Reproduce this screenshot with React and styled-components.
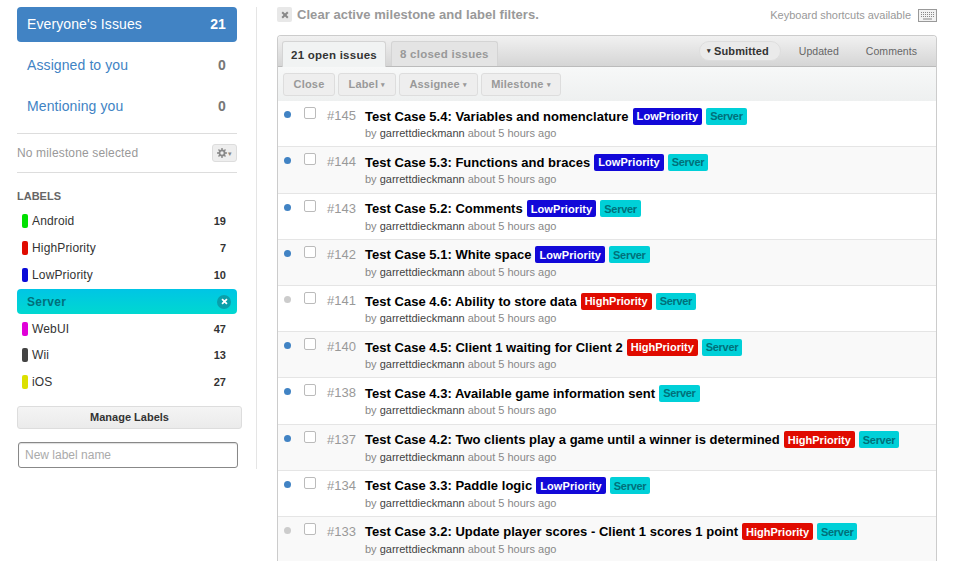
import React from 'react';
import styled, { createGlobalStyle } from 'styled-components';

const Global = createGlobalStyle`
  html, body { margin: 0; padding: 0; background: #fff; overflow: hidden; height: 561px; }
  body { font-family: "Liberation Sans", Arial, sans-serif; font-size: 12px; color: #333; }
`;
const Page = styled.div`display: flex; width: 966px; height: 561px; overflow: hidden;`;
const Sidebar = styled.aside`
  width: 225px; margin-left: 17px; padding-top: 7px; flex: none; position: relative;
`;
const Divider = styled.div`width: 1px; height: 462px; margin: 7px 0 0 14px; background: #e5e5e5; flex: none;`;
const Main = styled.main`width: 660px; margin-left: 20px; flex: none;`;
const NavList = styled.div`width: 220px; display: flex; flex-direction: column; gap: 6px;`;
const NavItem = styled.a`
  display: flex; justify-content: space-between; align-items: center; height: 35px; box-sizing: border-box; padding: 0 11px 2px 10px;
  border-radius: 4px; font-size: 14px; letter-spacing: .1px; color: ${p => p.$active ? '#fff' : '#4183c4'};
  background: ${p => p.$active ? '#4183c4' : 'transparent'};
`;
const NavCount = styled.b`font-size: 14px; color: ${p => p.$active ? '#fff' : '#777'};`;
const MilestoneRow = styled.div`
  width: 220px; height: 38px; margin-top: 9px; border-top: 1px solid #ddd; border-bottom: 1px solid #ddd;
  display: flex; align-items: center; justify-content: space-between; font-size: 12px; letter-spacing: .15px; color: #999;
  box-sizing: content-box;
`;
const GearButton = styled.span`
  width: 25px; height: 18px; box-sizing: border-box; border: 1px solid #ddd; border-radius: 3px; background: #eee;
  display: flex; align-items: center; justify-content: center; gap: 1px; color: #888;
`;
const LabelsHead = styled.h3`margin: 16px 0 0; font-size: 11px; line-height: 14px; font-weight: bold; color: #666;`;
const LabelList = styled.div`width: 220px; margin-top: 5px; display: flex; flex-direction: column;`;
const LabelRow = styled.div`
  height: 26.8px; padding: 0 11px 0 5px; display: flex; align-items: center; font-size: 12px; color: #333;
`;
const Swatch = styled.i`width: 6px; height: 14px; border-radius: 2px; background: ${p => p.$c}; margin-right: 4px;`;
const LabelName = styled.span`flex: 1; letter-spacing: .15px;`;
const LabelCount = styled.b`font-size: 11px; color: #333;`;
const ActiveLabel = styled.div`
  height: 25px; border-radius: 4px; background: linear-gradient(#00c5e5, #00d8d0); color: #00707a; font-weight: bold; font-size: 12px; letter-spacing: .3px;
  display: flex; align-items: center; justify-content: space-between; padding: 0 6px 0 10px; margin: .9px 0;
`;
const ClearDot = styled.span`
  width: 14px; height: 14px; border-radius: 50%; background: #0a9faa; color: #fff; display: flex; align-items: center; justify-content: center;
`;
const ManageButton = styled.button`
  display: block; width: 225px; height: 23px; margin-top: 10px; border: 1px solid #ddd; border-radius: 3px;
  background: linear-gradient(#f4f4f4, #ebebeb); font: bold 11px "Liberation Sans", sans-serif; color: #333; padding: 0;
`;
const LabelInput = styled.input`
  display: block; width: 220px; height: 26px; box-sizing: border-box; margin: 13px 0 0 1px; border: 1px solid #888; border-radius: 3px;
  padding: 0 6px; font: 12px "Liberation Sans", sans-serif; background: #fff; box-shadow: inset 0 1px 1px #ddd;
  &::placeholder { color: #aaa; opacity: 1; }
`;
const TopBar = styled.div`height: 35px; display: flex; align-items: center; justify-content: space-between; box-sizing: border-box;`;
const ClearFilters = styled.div`display: flex; align-items: center; gap: 5px; font-size: 13px; font-weight: bold; color: #999; margin-top: -6px; letter-spacing: .05px;`;
const ClearBox = styled.span`
  width: 15px; height: 15px; border-radius: 2px; background: #e8e8e8; color: #888; display: flex; align-items: center; justify-content: center;
`;
const Shortcuts = styled.div`display: flex; align-items: center; gap: 7px; font-size: 11px; color: #999; margin-top: -5px; letter-spacing: -.02px;`;
const Panel = styled.section`border: 1px solid #ccc; border-bottom: 0; border-radius: 4px 4px 0 0; width: 660px; box-sizing: border-box; overflow: hidden;`;
const TabBar = styled.div`
  height: 30px; box-sizing: content-box; background: linear-gradient(#f1f1f1, #d5d5d5); border-bottom: 1px solid #bbb;
  display: flex; align-items: flex-end; justify-content: space-between; padding: 0 7px 0 4px;
`;
const Tabs = styled.div`display: flex; gap: 5px;`;
const Tab = styled.div`
  height: 25px; box-sizing: border-box; border: 1px solid #d4d4d4; border-bottom: 0; border-radius: 3px 3px 0 0; padding: 0 8px;
  display: flex; align-items: center; font-size: 11.5px; font-weight: bold; letter-spacing: .25px;
  background: ${p => p.$active ? '#f1f3f3' : '#e4e4e4'}; color: ${p => p.$active ? '#333' : '#999'};
  ${p => p.$active && 'margin-bottom: -1px; height: 26px;'}
`;
const Sort = styled.div`display: flex; align-items: center; align-self: center; font-size: 10.5px; letter-spacing: .05px; color: #666; margin-top: -1px;`;
const SortItem = styled.span`
  display: flex; align-items: center; padding: ${p => p.$active ? '0 11px 0 7px' : '0'}; gap: 3px;
  ${p => p.$active ? 'height:20px;box-sizing:border-box;background:#eaeaea;border:1px solid #ddd;border-radius:10px;font-weight:bold;color:#333;font-size:11px;letter-spacing:.1px;margin-right:18px;' : 'margin-right:27px;'}
  &:last-child { margin-right: 12px; }
`;
const Actions = styled.div`
  height: 34.3px; background: linear-gradient(#f7f8f8, #eef0f0); display: flex; align-items: center; gap: 3px; padding: 0 5px; box-sizing: border-box;
`;
const ActionBtn = styled.span`
  height: 23px; box-sizing: border-box; border: 1px solid #ddd; border-radius: 3px; background: #eee; padding: 0 9.5px;
  display: flex; align-items: center; gap: 3px; font-size: 11px; font-weight: bold; color: #999; letter-spacing: .2px;
`;
const Caret = styled.span`font-size: 7px; line-height: 1;`;
const Row = styled.div`
  height: 46.2px; box-sizing: border-box; border-bottom: 1px solid #e5e5e5; display: flex; align-items: flex-start;
  background: ${p => p.$alt ? '#f9f9f9' : '#fff'};
`;
const Dot = styled.i`width: 7px; height: 7px; border-radius: 50%; background: ${p => p.$read ? '#ccc' : '#4183c4'}; margin: 10px 0 0 6px; flex: none;`;
const Check = styled.i`
  width: 12px; height: 12px; box-sizing: border-box; border: 1px solid #bbb; border-radius: 2px; background: #fff; margin: 6px 0 0 13px; flex: none;
`;
const Num = styled.span`width: 38px; margin-left: 11px; font-size: 13px; line-height: 14px; margin-top: 8px; color: #999; flex: none;`;
const Body = styled.div`padding-top: 7px; min-width: 0;`;
const Title = styled.div`display: flex; align-items: center; gap: 4px; height: 16px; font-size: 13px; font-weight: bold; color: #000; letter-spacing: .02px; white-space: nowrap;`;
const Tag = styled.span`
  height: 17px; padding: 0 4px; border-radius: 2px; display: flex; align-items: center; font-size: 11px; font-weight: bold; letter-spacing: ${p => p.$ls}px;
  background: ${p => p.$bg}; color: ${p => p.$fg};
`;
const Meta = styled.div`margin-top: 3px; font-size: 11px; line-height: 13px; color: #888; white-space: nowrap;`;
const Author = styled.span`color: #444;`;

const X = ({ s = 8, c = 'currentColor' }) => (
  <svg width={s} height={s} viewBox="0 0 8 8"><path d="M1.2 1.2 6.8 6.8M6.8 1.2 1.2 6.8" stroke={c} strokeWidth="2" /></svg>
);
const Gear = () => (
  <svg width="10" height="10" viewBox="0 0 10 10"><circle cx="5" cy="5" r="2.6" fill="none" stroke="#888" strokeWidth="1.8" /><path d="M5 0v2M5 8v2M0 5h2M8 5h2M1.5 1.5l1.4 1.4M7.1 7.1l1.4 1.4M8.5 1.5 7.1 2.9M2.9 7.1 1.5 8.5" stroke="#888" strokeWidth="1.4" /></svg>
);
const Keyboard = () => (
  <svg width="19" height="13" viewBox="0 0 19 13">
    <rect x=".5" y=".5" width="18" height="12" fill="#f2f2f2" stroke="#999" />
    <path d="M3 3.5h13M3 5.5h13M3 7.5h13" stroke="#888" strokeDasharray="1 1" />
    <path d="M5 10h9" stroke="#888" />
  </svg>
);

const LOW = { $bg: '#1208d8', $fg: '#fff', $ls: 0.1, t: 'LowPriority' };
const HIGH = { $bg: '#e00b00', $fg: '#fff', $ls: 0, t: 'HighPriority' };
const SRV = { $bg: '#00d0d8', $fg: '#00707a', $ls: -0.3, t: 'Server' };
const issues = [
  [145, 'Test Case 5.4: Variables and nomenclature', [LOW, SRV]],
  [144, 'Test Case 5.3: Functions and braces', [LOW, SRV]],
  [143, 'Test Case 5.2: Comments', [LOW, SRV]],
  [142, 'Test Case 5.1: White space', [LOW, SRV]],
  [141, 'Test Case 4.6: Ability to store data', [HIGH, SRV], true],
  [140, 'Test Case 4.5: Client 1 waiting for Client 2', [HIGH, SRV]],
  [138, 'Test Case 4.3: Available game information sent', [SRV]],
  [137, 'Test Case 4.2: Two clients play a game until a winner is determined', [HIGH, SRV]],
  [134, 'Test Case 3.3: Paddle logic', [LOW, SRV]],
  [133, 'Test Case 3.2: Update player scores - Client 1 scores 1 point', [HIGH, SRV], true],
];
const labels = [
  ['Android', 19, '#00e000'], ['HighPriority', 7, '#e00b00'], ['LowPriority', 10, '#0b0bd8'], null,
  ['WebUI', 47, '#e000d8'], ['Wii', 13, '#444'], ['iOS', 27, '#dce000'],
];

export default function App() {
  return (
    <Page>
      <Global />
      <Sidebar>
        <NavList>
          <NavItem $active>Everyone's Issues<NavCount $active>21</NavCount></NavItem>
          <NavItem>Assigned to you<NavCount>0</NavCount></NavItem>
          <NavItem>Mentioning you<NavCount>0</NavCount></NavItem>
        </NavList>
        <MilestoneRow>No milestone selected<GearButton><Gear /><Caret>▾</Caret></GearButton></MilestoneRow>
        <LabelsHead>LABELS</LabelsHead>
        <LabelList>
          {labels.map((l, i) => l ? (
            <LabelRow key={i}><Swatch $c={l[2]} /><LabelName>{l[0]}</LabelName><LabelCount>{l[1]}</LabelCount></LabelRow>
          ) : (
            <ActiveLabel key={i}>Server<ClearDot><X s={7} /></ClearDot></ActiveLabel>
          ))}
        </LabelList>
        <ManageButton>Manage Labels</ManageButton>
        <LabelInput placeholder="New label name" />
      </Sidebar>
      <Divider />
      <Main>
        <TopBar>
          <ClearFilters><ClearBox><X /></ClearBox>Clear active milestone and label filters.</ClearFilters>
          <Shortcuts>Keyboard shortcuts available<Keyboard /></Shortcuts>
        </TopBar>
        <Panel>
          <TabBar>
            <Tabs><Tab $active>21 open issues</Tab><Tab>8 closed issues</Tab></Tabs>
            <Sort>
              <SortItem $active><Caret>▾</Caret>Submitted</SortItem>
              <SortItem>Updated</SortItem>
              <SortItem>Comments</SortItem>
            </Sort>
          </TabBar>
          <Actions>
            <ActionBtn>Close</ActionBtn>
            <ActionBtn>Label<Caret>▾</Caret></ActionBtn>
            <ActionBtn>Assignee<Caret>▾</Caret></ActionBtn>
            <ActionBtn>Milestone<Caret>▾</Caret></ActionBtn>
          </Actions>
          {issues.map(([n, t, tags, read], i) => (
            <Row key={n} $alt={i % 2 === 1}>
              <Dot $read={read} />
              <Check />
              <Num>#{n}</Num>
              <Body>
                <Title>{t}{tags.map(g => <Tag key={g.t} $bg={g.$bg} $fg={g.$fg} $ls={g.$ls}>{g.t}</Tag>)}</Title>
                <Meta>by <Author>garrettdieckmann</Author> about 5 hours ago</Meta>
              </Body>
            </Row>
          ))}
        </Panel>
      </Main>
    </Page>
  );
}
